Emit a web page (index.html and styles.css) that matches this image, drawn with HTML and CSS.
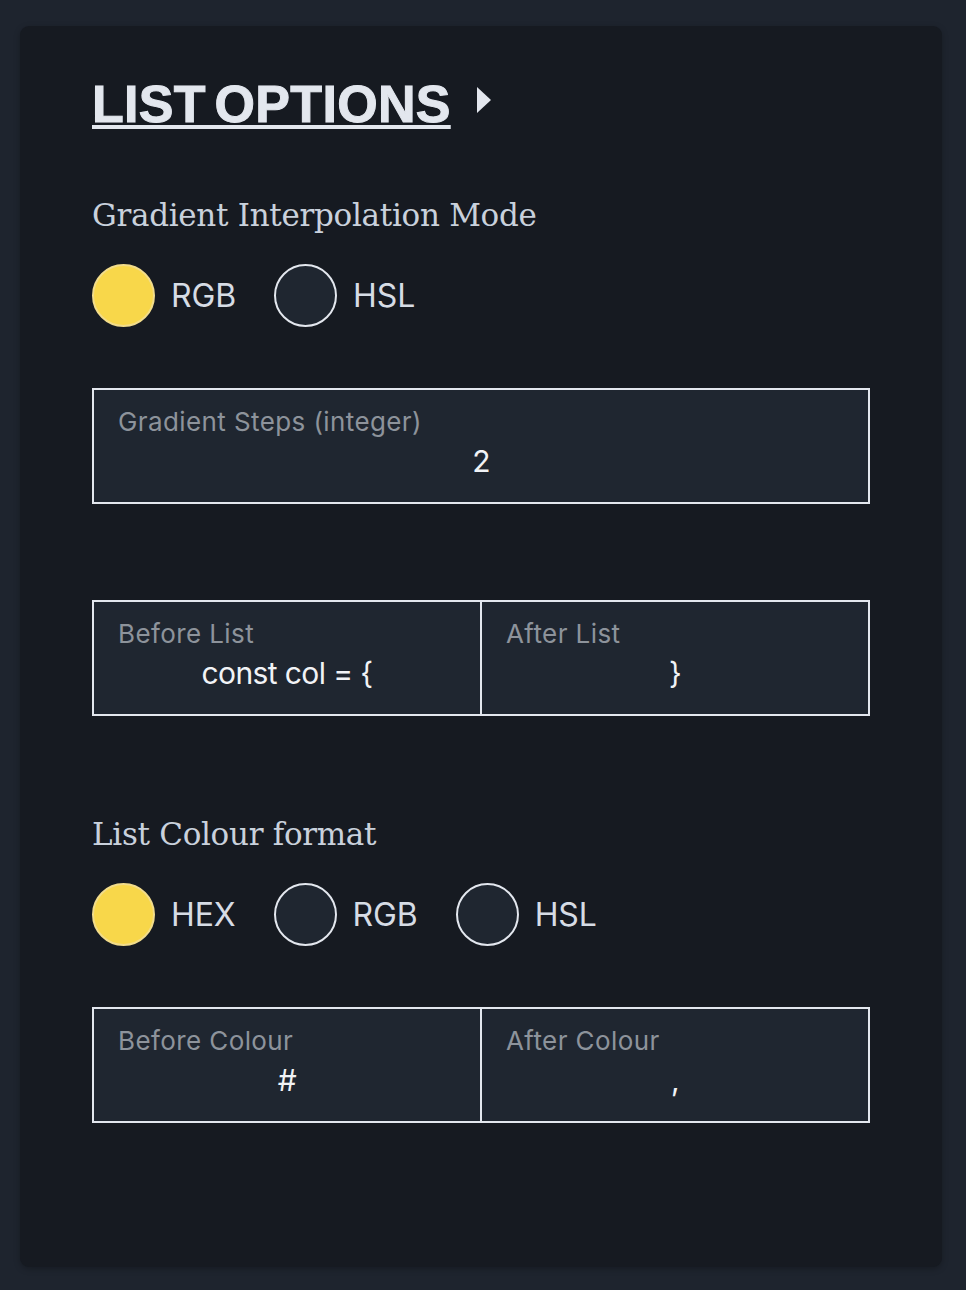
FILE: index.html
```html
<!DOCTYPE html>
<html lang="en">
<head>
<meta charset="utf-8">
<title>List Options</title>
<link rel="stylesheet" href="styles.css">
</head>
<body>
<section class="card">
  <header class="heading">
    <h1 class="heading-title">LIST OPTIONS</h1>
    <svg class="heading-arrow" width="14" height="26" viewBox="0 0 14 26"><path d="M0 0 L14 13 L0 26 Z" fill="#e3e7ee"/></svg>
  </header>

  <h2 class="section-title first">Gradient Interpolation Mode</h2>
  <div class="radios">
    <label class="radio"><span class="dot on"></span><span class="radio-label">RGB</span></label>
    <label class="radio"><span class="dot"></span><span class="radio-label">HSL</span></label>
  </div>

  <div class="field-row">
    <div class="field">
      <div class="field-label">Gradient Steps (integer)</div>
      <div class="field-value">2</div>
    </div>
  </div>

  <div class="field-row split gap-big">
    <div class="field">
      <div class="field-label">Before List</div>
      <div class="field-value">const col = {</div>
    </div>
    <div class="field">
      <div class="field-label">After List</div>
      <div class="field-value">}</div>
    </div>
  </div>

  <h2 class="section-title second">List Colour format</h2>
  <div class="radios">
    <label class="radio"><span class="dot on"></span><span class="radio-label">HEX</span></label>
    <label class="radio"><span class="dot"></span><span class="radio-label">RGB</span></label>
    <label class="radio"><span class="dot"></span><span class="radio-label">HSL</span></label>
  </div>

  <div class="field-row split">
    <div class="field">
      <div class="field-label">Before Colour</div>
      <div class="field-value">#</div>
    </div>
    <div class="field">
      <div class="field-label">After Colour</div>
      <div class="field-value">,</div>
    </div>
  </div>
</section>
</body>
</html>
```

FILE: styles.css
```css
* { box-sizing: border-box; }

html, body {
  margin: 0;
  padding: 0;
  background: #1e242e;
}

body {
  padding: 26px 24px 23px 20px;
  font-family: Inter, "Liberation Sans", sans-serif;
}

.card {
  width: 922px;
  height: 1241px;
  background: #161a21;
  border-radius: 9px;
  padding: 52px 72px 0 72px;
  box-shadow: 0 2px 6px rgba(0,0,0,0.25);
}

.heading {
  display: flex;
  align-items: flex-start;
  height: 52px;
}

.heading-title {
  margin: 0;
  font-family: "Liberation Sans", Arial, sans-serif;
  font-weight: 700;
  font-size: 52px;
  line-height: 52px;
  letter-spacing: 0.3px;
  word-spacing: -6px;
  color: #e3e7ee;
  -webkit-text-stroke: 1px #e3e7ee;
  text-decoration: underline;
  text-decoration-thickness: 4px;
  text-underline-offset: 3px;
}

.heading-arrow {
  margin-left: 26px;
  margin-top: 9px;
}

.section-title {
  margin: 0;
  font-family: "DejaVu Serif", "Liberation Serif", serif;
  font-weight: 400;
  font-size: 31px;
  line-height: 36px;
  color: #c9d1dc;
  letter-spacing: -0.3px;
}

.section-title.first { margin-top: 67px; }
.section-title.second { margin-top: 100px; }

.radios {
  display: flex;
  gap: 38px;
  margin-top: 31px;
}

.radio {
  display: flex;
  align-items: center;
  gap: 16px;
}

.dot {
  width: 63px;
  height: 63px;
  border-radius: 50%;
  border: 2px solid #e3e7ee;
  background: #1f2630;
}

.dot.on {
  background: #f8d74a;
  border-color: #f2dc8a;
}

.radio-label {
  font-size: 32px;
  letter-spacing: -0.1px;
  color: #d6dce5;
}

.field-row {
  display: flex;
  margin-top: 61px;
  height: 116px;
  border: 2px solid #e3e7ee;
  background: #1f2630;
}

.field-row.gap-big { margin-top: 96px; }

.field {
  flex: 1;
  padding: 17px 24px 0 24px;
}

.split .field + .field {
  border-left: 2px solid #e3e7ee;
}

.field-label {
  font-size: 26px;
  line-height: 30px;
  letter-spacing: 0.4px;
  color: #8d939b;
}

.field-value {
  margin-top: 6px;
  font-size: 30px;
  line-height: 36px;
  letter-spacing: -0.6px;
  color: #f1f3f6;
  text-align: center;
}
```
